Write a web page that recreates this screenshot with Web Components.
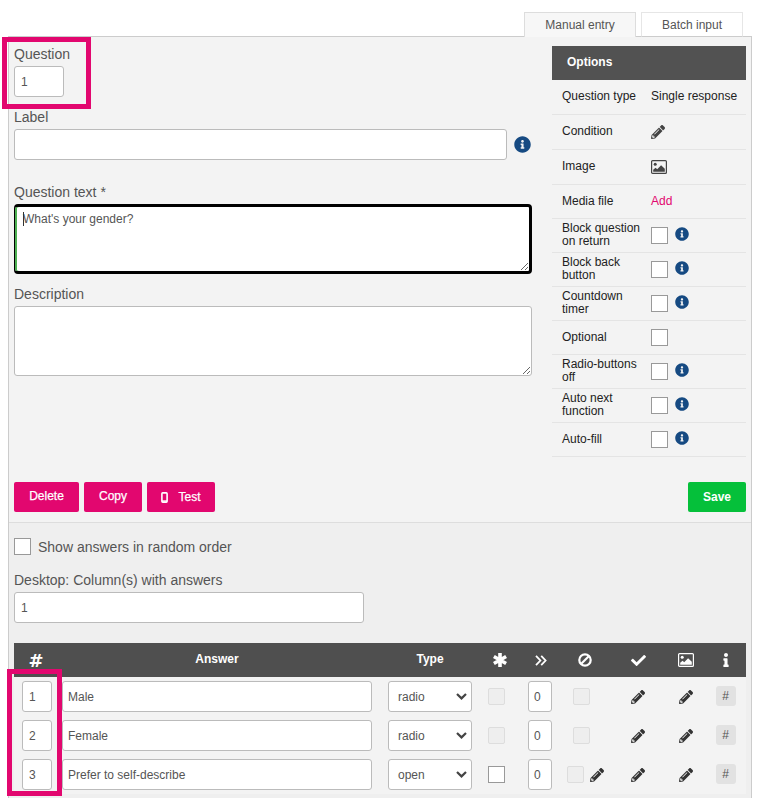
<!DOCTYPE html>
<html lang="en">
<head>
<meta charset="utf-8">
<title>Question editor</title>
<style>
  html, body { margin: 0; background: #fff; }
  body { width: 765px; height: 798px; overflow: hidden; font-family: "Liberation Sans", Arial, sans-serif; }
</style>
</head>
<body>
<question-editor></question-editor>

<script>
const ICONS = {
  pencil: { box: "0 0 512 512", body: '<path fill="currentColor" d="M497.9 142.1l-46.1 46.1c-4.7 4.7-12.3 4.7-17 0l-111-111c-4.7-4.7-4.7-12.3 0-17l46.1-46.1c18.7-18.7 49.1-18.7 67.9 0l60.1 60.1c18.8 18.7 18.8 49.1 0 68zM284.2 99.8L21.6 362.4.4 483.9c-2.9 16.4 11.4 30.6 27.8 27.8l121.5-21.3 262.6-262.6c4.7-4.7 4.7-12.3 0-17l-111-111c-4.8-4.7-12.4-4.7-17.1 0zM124.1 339.9c-5.5-5.5-5.5-14.3 0-19.8l154-154c5.5-5.5 14.3-5.5 19.8 0s5.5 14.3 0 19.8l-154 154c-5.5 5.5-14.3 5.5-19.8 0zM88 424h48v36.3l-64.5 11.3-31.1-31.1L51.7 376H88v48z"/>' },
  info: { box: "0 0 512 512", body: '<path fill="currentColor" d="M256 8C119 8 8 119 8 256s111 248 248 248 248-111 248-248S393 8 256 8zm0 110c23.196 0 42 18.804 42 42s-18.804 42-42 42-42-18.804-42-42 18.804-42 42-42zm56 254c0 6.627-5.373 12-12 12h-88c-6.627 0-12-5.373-12-12v-24c0-6.627 5.373-12 12-12h12v-64h-12c-6.627 0-12-5.373-12-12v-24c0-6.627 5.373-12 12-12h64c6.627 0 12 5.373 12 12v100h12c6.627 0 12 5.373 12 12v24z"/>' },
  check: { box: "0 0 512 512", body: '<path fill="currentColor" d="M173.898 439.404l-166.4-166.4c-9.997-9.997-9.997-26.206 0-36.204l36.203-36.204c9.997-9.998 26.207-9.998 36.204 0L192 312.69 432.095 72.596c9.997-9.997 26.207-9.997 36.204 0l36.203 36.204c9.997 9.997 9.997 26.206 0 36.204l-294.4 294.401c-9.998 9.997-26.207 9.997-36.204-.001z"/>' },
  letter: { box: "0 0 192 512", body: '<path fill="currentColor" d="M20 424.229h20V279.771H20c-11.046 0-20-8.954-20-20V212c0-11.046 8.954-20 20-20h112c11.046 0 20 8.954 20 20v212.229h20c11.046 0 20 8.954 20 20V492c0 11.046-8.954 20-20 20H20c-11.046 0-20-8.954-20-20v-47.771c0-11.046 8.954-20 20-20zM96 0C56.235 0 24 32.235 24 72s32.235 72 72 72 72-32.235 72-72S135.764 0 96 0z"/>' },
  image: { box: "0 0 16 14", body: '<rect x=".6" y=".6" width="14.8" height="12.8" rx="1" fill="none" stroke="currentColor" stroke-width="1.2"/><circle cx="4.2" cy="4.2" r="1.5" fill="currentColor"/><path fill="currentColor" d="M2.2 11.8V9.8l2.4-2 1.6 1.5 3.9-4.1 3.7 3.5v3.1z"/>' },
  asterisk: { box: "0 0 14 14", body: '<path fill="none" stroke="currentColor" stroke-width="3.6" d="M7 0v14M.9 3.5l12.2 7M.9 10.5l12.2-7"/>' },
  doubleright: { box: "0 0 12 11", body: '<path fill="none" stroke="currentColor" stroke-width="1.8" d="M1 .8l4.4 4.7L1 10.2M6.2.8l4.4 4.7-4.4 4.7"/>' },
  ban: { box: "0 0 14 14", body: '<circle cx="7" cy="7" r="5.7" fill="none" stroke="currentColor" stroke-width="2.2"/><path stroke="currentColor" stroke-width="2.2" d="M3 11l8-8"/>' },
  chevron: { box: "0 0 11 7", body: '<path fill="none" stroke="currentColor" stroke-width="2.2" d="M1 1l4.5 4.4L10 1"/>' },
  mobile: { box: "0 0 7 11", body: '<rect x=".9" y=".9" width="5.2" height="9.2" rx=".8" fill="none" stroke="currentColor" stroke-width="1.6"/><path stroke="currentColor" stroke-width="1.4" d="M1 9h5"/>' }
};

class UiIcon extends HTMLElement {
  connectedCallback(){
    const icon = ICONS[this.getAttribute("name")];
    const w = this.getAttribute("w") || 14;
    const h = this.getAttribute("h") || w;
    this.attachShadow({ mode:"open" }).innerHTML = `
      <style>
        :host{ display:inline-flex; flex:none; line-height:0; }
      </style>
      <svg width="${w}" height="${h}" viewBox="${icon.box}" aria-hidden="true">${icon.body}</svg>
    `;
  }
}
customElements.define("ui-icon", UiIcon);

class TextField extends HTMLElement {
  constructor(){
    super();
    this.attachShadow({ mode:"open" }).innerHTML = `
      <style>
        :host{
          display:flex;
          align-items:center;
          box-sizing:border-box;
          height:31px;
          padding:0 6px;
          background:#fff;
          border:1px solid #bbb;
          border-radius:3px;
          font-size:12px;
          color:#555;
          white-space:nowrap;
        }
      </style>
      <slot></slot>
    `;
  }
}
customElements.define("text-field", TextField);

class SelectField extends HTMLElement {
  constructor(){
    super();
    this.attachShadow({ mode:"open" }).innerHTML = `
      <style>
        :host{
          display:flex;
          align-items:center;
          justify-content:space-between;
          box-sizing:border-box;
          height:31px;
          padding:0 4px 0 9px;
          background:#fff;
          border:1px solid #bbb;
          border-radius:3px;
          font-size:12px;
          color:#555;
        }
        ui-icon{ color:#444; }
      </style>
      <slot></slot>
      <ui-icon name="chevron" w="11" h="7"></ui-icon>
    `;
  }
}
customElements.define("select-field", SelectField);

class CheckBox extends HTMLElement {
  constructor(){
    super();
    this.attachShadow({ mode:"open" }).innerHTML = `
      <style>
        :host{
          display:block;
          flex:none;
          box-sizing:border-box;
          width:17px;
          height:17px;
          background:#fff;
          border:1px solid #999;
        }
        :host([disabled]){
          background:#eee;
          border-color:#ddd;
          border-radius:2px;
        }
      </style>
    `;
  }
}
customElements.define("check-box", CheckBox);

class TabBar extends HTMLElement {
  constructor(){
    super();
    this.attachShadow({ mode:"open" }).innerHTML = `
      <style>
        :host{
          display:flex;
          justify-content:flex-end;
          gap:5px;
          padding-right:9px;
          margin-bottom:-1px;
          position:relative;
          z-index:1;
          font-size:12px;
          color:#555;
        }
        .tab{
          display:flex;
          align-items:center;
          justify-content:center;
          box-sizing:border-box;
          height:25px;
          background:#fff;
          border:1px solid #e6e6e6;
        }
        .active{
          width:112px;
          background:#f7f7f7;
          border-color:#ddd;
          border-bottom:0;
        }
        .other{
          width:102px;
          border-bottom-color:#ccc;
        }
      </style>
      <div class="tab active">Manual entry</div>
      <div class="tab other">Batch input</div>
    `;
  }
}
customElements.define("tab-bar", TabBar);

class FormField extends HTMLElement {
  constructor(){
    super();
    this.attachShadow({ mode:"open" }).innerHTML = `
      <style>
        :host{ display:block; color:#555; font-size:14px; }
        .label{ display:block; height:16px; line-height:16px; margin-bottom:4px; }
      </style>
      <span class="label"><slot name="label"></slot></span>
      <slot></slot>
    `;
  }
}
customElements.define("form-field", FormField);

class QuestionForm extends HTMLElement {
  constructor(){
    super();
    this.attachShadow({ mode:"open" }).innerHTML = `
      <style>
        :host{
          display:flex;
          flex-direction:column;
          width:518px;
          padding-top:9px;
        }
        .short{ width:50px; }
        .with-help{ display:flex; align-items:center; gap:7px; }
        .with-help text-field{ width:493px; }
        .with-help ui-icon{ color:#164a82; }
        .gap-s{ margin-top:12px; }
        .gap-l{ margin-top:24px; }
        .area{ position:relative; height:70px; }
        textarea{
          display:block;
          box-sizing:border-box;
          width:518px;
          height:70px;
          margin:0;
          padding:6px 8px;
          background:#fff;
          border:1px solid #bbb;
          border-radius:3px;
          font:12px/14px "Liberation Sans", Arial, sans-serif;
          color:#555;
          outline:0;
        }
        .focused{
          border:3px solid #000;
          border-left-width:1px;
          border-radius:4px;
          padding:5px 8px;
          box-shadow:inset 2px 0 0 #4caf50;
        }
        .caret{
          position:absolute;
          left:9px;
          top:8px;
          width:1px;
          height:14px;
          background:#333;
        }
      </style>
      <form-field>
        <span slot="label">Question</span>
        <text-field class="short">1</text-field>
      </form-field>
      <form-field class="gap-s">
        <span slot="label">Label</span>
        <div class="with-help">
          <text-field></text-field>
          <ui-icon name="info" w="17"></ui-icon>
        </div>
      </form-field>
      <form-field class="gap-l">
        <span slot="label">Question text *</span>
        <div class="area">
          <textarea class="focused">What's your gender?</textarea>
          <span class="caret"></span>
        </div>
      </form-field>
      <form-field class="gap-s">
        <span slot="label">Description</span>
        <div class="area"><textarea></textarea></div>
      </form-field>
    `;
  }
}
customElements.define("question-form", QuestionForm);

class OptionRow extends HTMLElement {
  constructor(){
    super();
    this.attachShadow({ mode:"open" }).innerHTML = `
      <style>
        :host{
          display:grid;
          grid-template-columns:89px 1fr;
          align-items:center;
          box-sizing:border-box;
          height:34px;
          padding-left:10px;
          border-bottom:1px solid #e4e4e4;
          font-size:12px;
          line-height:13px;
          color:#222;
        }
        :host([tall]){ height:35px; padding-bottom:1px; }
        :host([media]){ padding-bottom:1px; }
        :host([two]) .name{ margin-top:-2px; }
        .value{ display:flex; align-items:center; gap:7px; }
        ::slotted(ui-icon[name="info"]){ color:#164a82; margin-top:-4px; }
      </style>
      <div class="name"><slot name="label"></slot></div>
      <div class="value"><slot></slot></div>
    `;
  }
}
customElements.define("option-row", OptionRow);

class OptionsPanel extends HTMLElement {
  constructor(){
    super();
    const flag = (label, help, two) => `
      <option-row ${two ? "two" : ""}>
        <span slot="label">${label}</span>
        <check-box></check-box>
        ${help ? '<ui-icon name="info" w="14"></ui-icon>' : ""}
      </option-row>`;
    this.attachShadow({ mode:"open" }).innerHTML = `
      <style>
        :host{
          display:block;
          width:194px;
          margin-top:9px;
        }
        header{
          box-sizing:border-box;
          height:34px;
          line-height:33px;
          padding-left:15px;
          background:#525252;
          color:#fff;
          font-size:12px;
          font-weight:bold;
        }
        .dark{ color:#444; }
        .add{ color:#e2076f; }
      </style>
      <header>Options</header>
      <option-row tall><span slot="label">Question type</span>Single response</option-row>
      <option-row tall><span slot="label">Condition</span><ui-icon class="dark" name="pencil" w="14"></ui-icon></option-row>
      <option-row tall><span slot="label">Image</span><ui-icon class="dark" name="image" w="16" h="14"></ui-icon></option-row>
      <option-row media><span slot="label">Media file</span><span class="add">Add</span></option-row>
      ${flag("Block question on return", true, true)}
      ${flag("Block back button", true, true)}
      ${flag("Countdown timer", true, true)}
      ${flag("Optional", false)}
      ${flag("Radio-buttons off", true, true)}
      ${flag("Auto next function", true, true)}
      ${flag("Auto-fill", true)}
    `;
  }
}
customElements.define("options-panel", OptionsPanel);

class ActionButton extends HTMLElement {
  constructor(){
    super();
    this.attachShadow({ mode:"open" }).innerHTML = `
      <style>
        :host{
          display:inline-flex;
          align-items:center;
          justify-content:center;
          gap:10px;
          box-sizing:border-box;
          height:30px;
          padding-bottom:2px;
          background:#e2076f;
          border-radius:2px;
          color:#fff;
          font-size:12px;
          -webkit-text-stroke:.25px #fff;
        }
        :host([save]){
          background:#05c03a;
          padding-bottom:0;
          font-weight:bold;
          -webkit-text-stroke:0;
        }
        :host([test]){ padding-bottom:0; }
      </style>
      <slot></slot>
    `;
  }
}
customElements.define("action-button", ActionButton);

class AnswerRow extends HTMLElement {
  connectedCallback(){
    const open = this.hasAttribute("open");
    this.attachShadow({ mode:"open" }).innerHTML = `
      <style>
        :host{
          display:grid;
          grid-template-columns:var(--answer-cols);
          align-items:center;
          height:39px;
          padding-top:4px;
          box-sizing:border-box;
          align-content:start;
          background:#f3f3f3;
        }
        .cell{ display:flex; align-items:center; justify-content:center; height:31px; color:#333; }
        .num{ width:30px; margin-left:8px; }
        .answer{ width:310px; padding-left:5px; }
        .type{ width:84px; }
        .center{ justify-content:flex-start; }
        .count{ width:24px; padding-left:5px; }
        .skip{ gap:6px; padding-right:${open ? 0 : 7}px; }
        .hash{
          display:flex;
          align-items:center;
          justify-content:center;
          width:20px;
          height:20px;
          margin:0 0 1px -3px;
          background:#e2e2e2;
          border-radius:3px;
          font-size:12px;
          color:#555;
        }
      </style>
      <text-field class="num">${this.getAttribute("num")}</text-field>
      <text-field class="answer">${this.getAttribute("text")}</text-field>
      <select-field class="type">${open ? "open" : "radio"}</select-field>
      <div class="cell center"><check-box ${open ? "" : "disabled"}></check-box></div>
      <text-field class="count">0</text-field>
      <div class="cell skip">
        <check-box disabled></check-box>
        ${open ? '<ui-icon name="pencil" w="14"></ui-icon>' : ""}
      </div>
      <div class="cell"><ui-icon name="pencil" w="14"></ui-icon></div>
      <div class="cell"><ui-icon name="pencil" w="14"></ui-icon></div>
      <div class="cell"><span class="hash">#</span></div>
    `;
  }
}
customElements.define("answer-row", AnswerRow);

class AnswerTable extends HTMLElement {
  constructor(){
    super();
    this.attachShadow({ mode:"open" }).innerHTML = `
      <style>
        :host{
          display:block;
          --answer-cols:48px 326px 100px 40px 30px 54px 52px 44px 38px;
        }
        header{
          display:grid;
          grid-template-columns:var(--answer-cols);
          align-items:center;
          justify-items:center;
          height:34px;
          background:#4f4f4f;
          color:#fff;
          font-size:12px;
          font-weight:bold;
        }
        .hash{ font:bold 18px "DejaVu Sans", sans-serif; margin-left:-4px; }
        .label{ margin-bottom:3px; }
        .star{ justify-self:start; margin-left:5px; }
        .more{ justify-self:start; margin-left:7px; }
      </style>
      <header>
        <span class="hash">#</span>
        <span class="label" style="margin-right:16px">Answer</span>
        <span class="label" style="margin-right:16px">Type</span>
        <ui-icon class="star" name="asterisk" w="14"></ui-icon>
        <ui-icon class="more" name="doubleright" w="12" h="11"></ui-icon>
        <ui-icon name="ban" w="14"></ui-icon>
        <ui-icon name="check" w="15"></ui-icon>
        <ui-icon name="image" w="16" h="14"></ui-icon>
        <ui-icon name="letter" w="6" h="14" style="margin-left:-3px"></ui-icon>
      </header>
      <answer-row num="1" text="Male"></answer-row>
      <answer-row num="2" text="Female"></answer-row>
      <answer-row num="3" text="Prefer to self-describe" open></answer-row>
    `;
  }
}
customElements.define("answer-table", AnswerTable);

class HighlightBox extends HTMLElement {
  connectedCallback(){
    this.attachShadow({ mode:"open" }).innerHTML = `
      <style>
        :host{
          position:absolute;
          left:${this.getAttribute("x")}px;
          top:${this.getAttribute("y")}px;
          width:${this.getAttribute("w")}px;
          height:${this.getAttribute("h")}px;
          box-sizing:border-box;
          border:5px solid #e2076f;
          z-index:2;
        }
      </style>
    `;
  }
}
customElements.define("highlight-box", HighlightBox);

class QuestionEditor extends HTMLElement {
  constructor(){
    super();
    this.attachShadow({ mode:"open" }).innerHTML = `
      <style>
        :host{
          display:block;
          position:relative;
          box-sizing:border-box;
          width:765px;
          height:798px;
          padding:12px 13px 0 8px;
          overflow:hidden;
          font-family:"Liberation Sans", Arial, sans-serif;
        }
        .panel{
          box-sizing:border-box;
          height:780px;
          border:1px solid #ccc;
          border-bottom:0;
          background:#efefef;
        }
        .top{
          background:#f3f3f3;
          border-bottom:1px solid #ddd;
          padding:0 5px 10px;
        }
        .columns{ display:flex; justify-content:space-between; align-items:flex-start; }
        .actions{ display:flex; gap:5px; margin-top:25px; }
        .actions .save{ margin-left:auto; width:58px; }
        .random{
          display:flex;
          align-items:center;
          gap:7px;
          color:#555;
          font-size:14px;
        }
        .bottom{ padding:15px 5px 0; }
        .columns-field{ margin-top:17px; }
        .columns-field text-field{ width:350px; }
        answer-table{ margin-top:20px; }
        .mobile{ margin-top:1px; }
      </style>
      <tab-bar></tab-bar>
      <section class="panel">
        <div class="top">
          <div class="columns">
            <question-form></question-form>
            <options-panel></options-panel>
          </div>
          <div class="actions">
            <action-button style="width:65px">Delete</action-button>
            <action-button style="width:58px">Copy</action-button>
            <action-button test style="width:68px"><ui-icon class="mobile" name="mobile" w="7" h="11"></ui-icon>Test</action-button>
            <action-button save class="save">Save</action-button>
          </div>
        </div>
        <div class="bottom">
          <label class="random"><check-box></check-box>Show answers in random order</label>
          <form-field class="columns-field">
            <span slot="label">Desktop: Column(s) with answers</span>
            <text-field>1</text-field>
          </form-field>
          <answer-table></answer-table>
        </div>
      </section>
      <highlight-box x="2" y="37" w="89" h="72"></highlight-box>
      <highlight-box x="7" y="669" w="55" h="127"></highlight-box>
    `;
  }
}
customElements.define("question-editor", QuestionEditor);
</script>
</body>
</html>
